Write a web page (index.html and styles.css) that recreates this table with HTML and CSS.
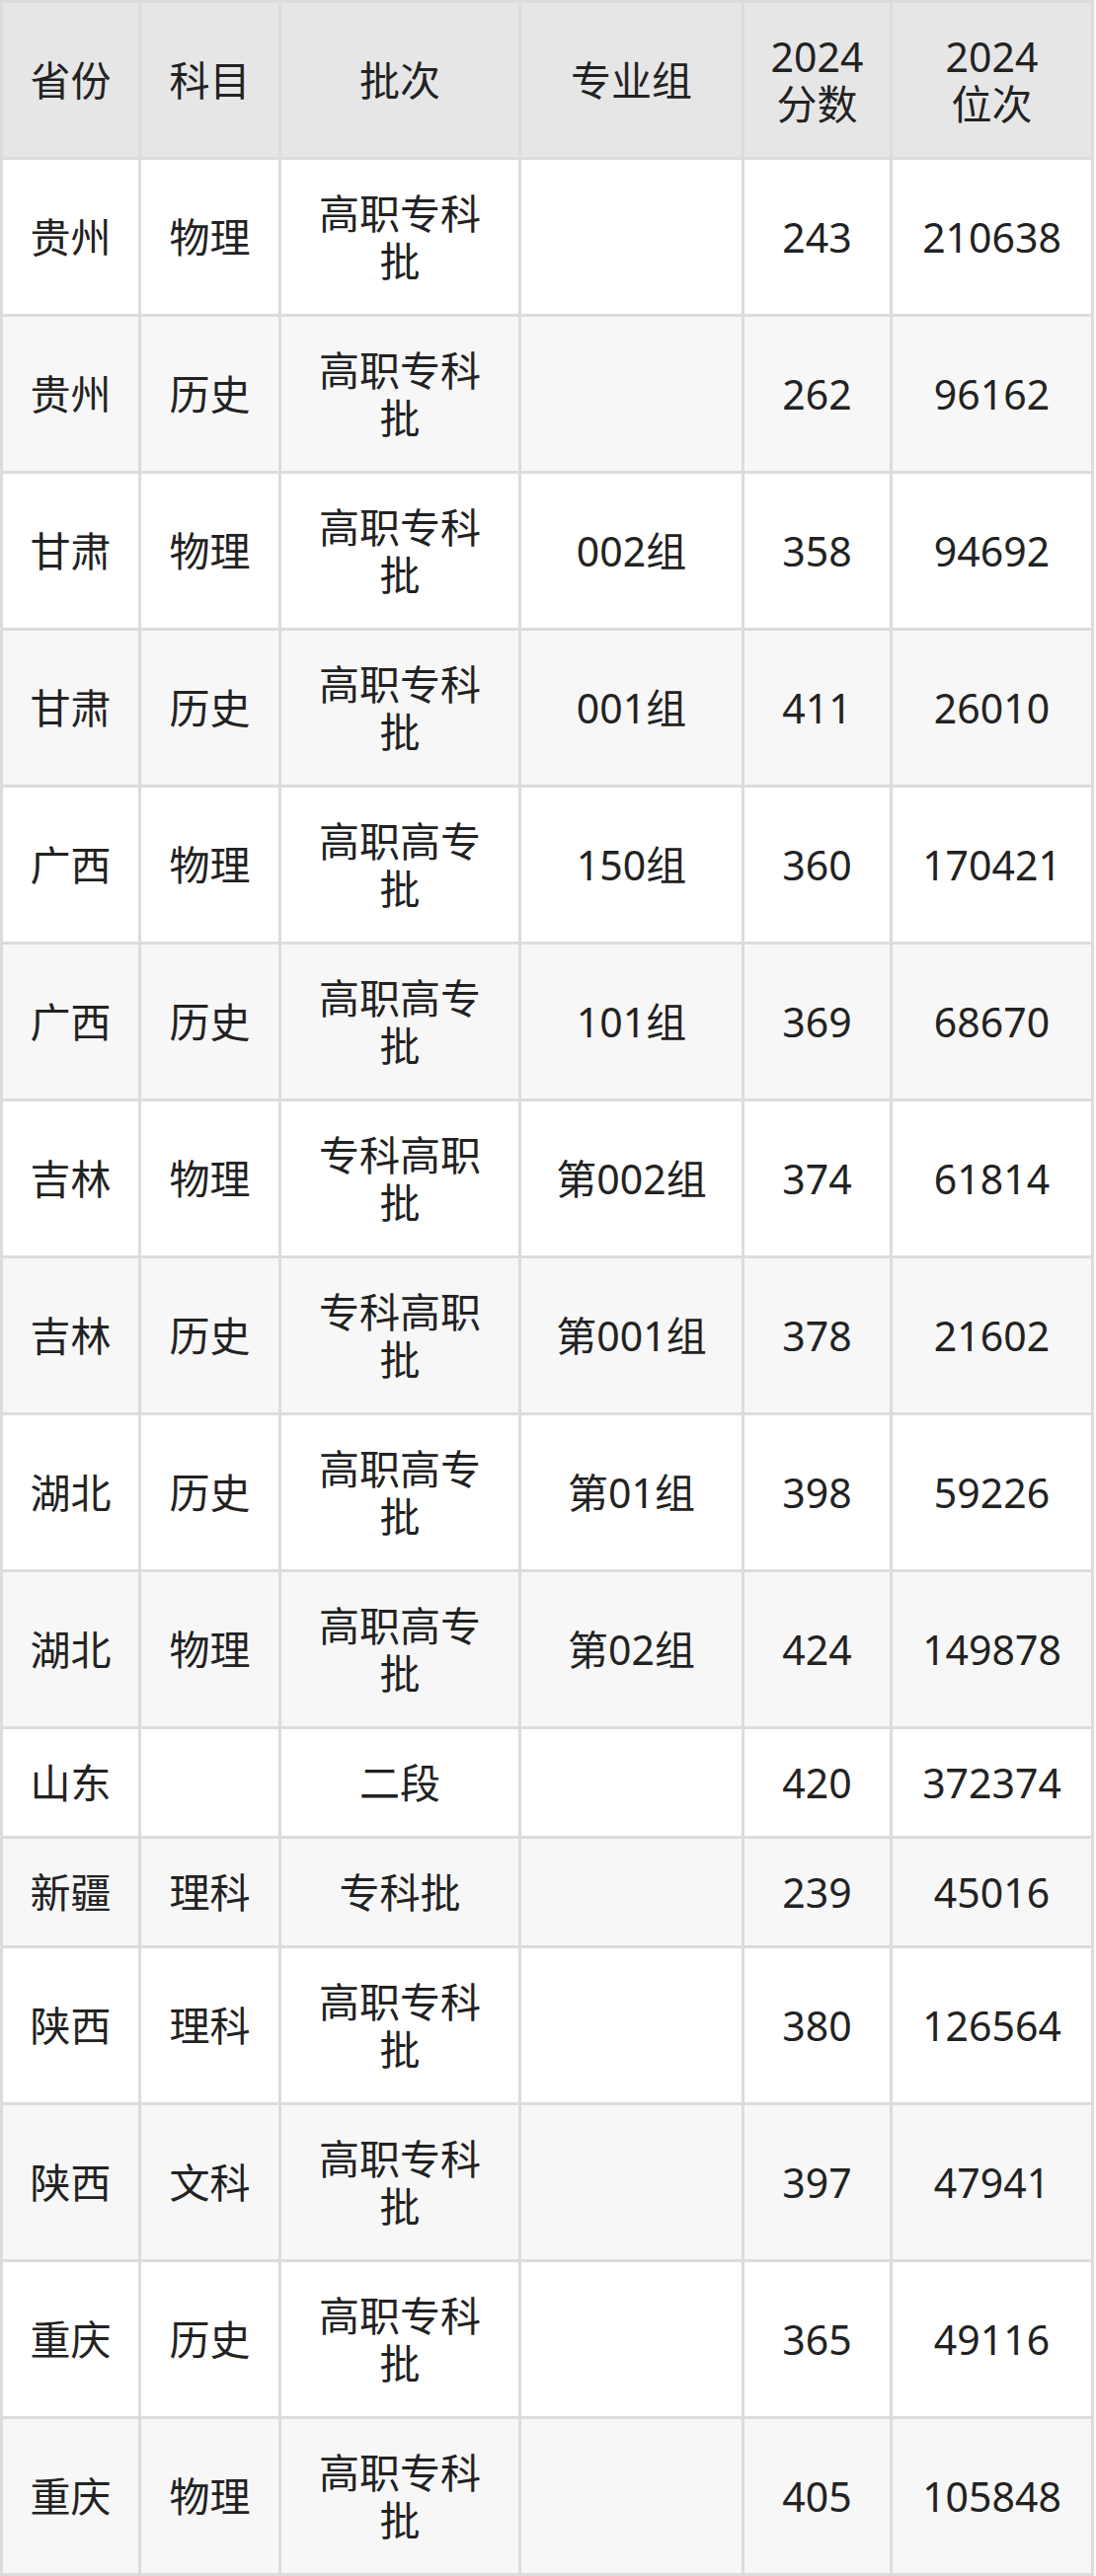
FILE: index.html
```html
<!DOCTYPE html>
<html lang="zh-CN">
<head>
<meta charset="utf-8">
<title>2024 分数位次</title>
<link rel="stylesheet" href="styles.css">
</head>
<body>
<table class="score-table">
  <colgroup>
    <col class="c-prov">
    <col class="c-subj">
    <col class="c-batch">
    <col class="c-group">
    <col class="c-score">
    <col class="c-rank">
  </colgroup>
  <thead>
    <tr>
      <th>省份</th>
      <th>科目</th>
      <th>批次</th>
      <th>专业组</th>
      <th>2024 分数</th>
      <th>2024 位次</th>
    </tr>
  </thead>
  <tbody>
    <tr><td>贵州</td><td>物理</td><td>高职专科批</td><td></td><td>243</td><td>210638</td></tr>
    <tr><td>贵州</td><td>历史</td><td>高职专科批</td><td></td><td>262</td><td>96162</td></tr>
    <tr><td>甘肃</td><td>物理</td><td>高职专科批</td><td>002组</td><td>358</td><td>94692</td></tr>
    <tr><td>甘肃</td><td>历史</td><td>高职专科批</td><td>001组</td><td>411</td><td>26010</td></tr>
    <tr><td>广西</td><td>物理</td><td>高职高专批</td><td>150组</td><td>360</td><td>170421</td></tr>
    <tr><td>广西</td><td>历史</td><td>高职高专批</td><td>101组</td><td>369</td><td>68670</td></tr>
    <tr><td>吉林</td><td>物理</td><td>专科高职批</td><td>第002组</td><td>374</td><td>61814</td></tr>
    <tr><td>吉林</td><td>历史</td><td>专科高职批</td><td>第001组</td><td>378</td><td>21602</td></tr>
    <tr><td>湖北</td><td>历史</td><td>高职高专批</td><td>第01组</td><td>398</td><td>59226</td></tr>
    <tr><td>湖北</td><td>物理</td><td>高职高专批</td><td>第02组</td><td>424</td><td>149878</td></tr>
    <tr><td>山东</td><td></td><td>二段</td><td></td><td>420</td><td>372374</td></tr>
    <tr><td>新疆</td><td>理科</td><td>专科批</td><td></td><td>239</td><td>45016</td></tr>
    <tr><td>陕西</td><td>理科</td><td>高职专科批</td><td></td><td>380</td><td>126564</td></tr>
    <tr><td>陕西</td><td>文科</td><td>高职专科批</td><td></td><td>397</td><td>47941</td></tr>
    <tr><td>重庆</td><td>历史</td><td>高职专科批</td><td></td><td>365</td><td>49116</td></tr>
    <tr><td>重庆</td><td>物理</td><td>高职专科批</td><td></td><td>405</td><td>105848</td></tr>
  </tbody>
</table>
</body>
</html>
```

FILE: styles.css
```css
html, body {
  margin: 0;
  padding: 0;
  background: #ffffff;
}

.score-table {
  width: 1108px;
  table-layout: fixed;
  border-collapse: separate;
  border-spacing: 3px;
  background: #dcdcdc;
  font-family: "Noto Sans", "Noto Sans CJK SC", sans-serif;
  font-size: 41px;
  line-height: 48px;
  color: #222222;
}

.c-prov { width: 137px; }
.c-subj { width: 139px; }
.c-batch { width: 240px; }
.c-group { width: 223px; }
.c-score { width: 147px; }
.c-rank { width: 201px; }

.score-table th,
.score-table td {
  padding: 30px 22px;
  text-align: center;
  vertical-align: middle;
  font-weight: normal;
}

.score-table th {
  background: #e6e6e6;
  height: 96px;
  word-break: keep-all;
}

.score-table td {
  background: #ffffff;
}

.score-table tbody tr:nth-child(even) td {
  background: #f7f7f7;
}
```
